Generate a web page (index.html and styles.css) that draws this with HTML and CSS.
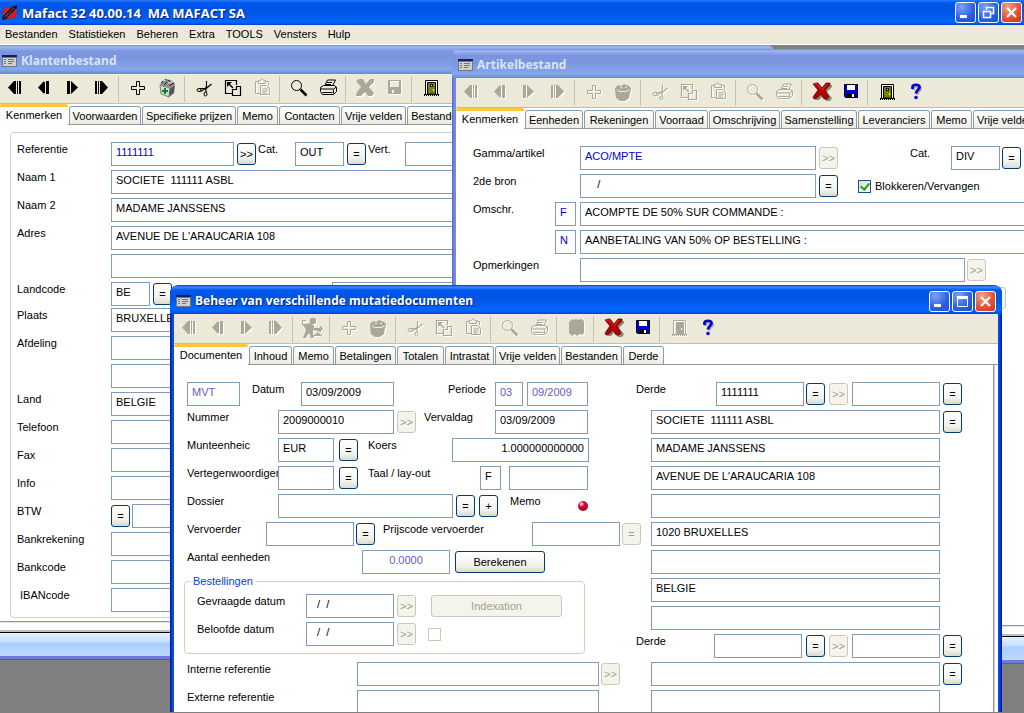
FILE: index.html
```html
<!DOCTYPE html>
<html lang="nl">
<head>
<meta charset="utf-8">
<title>Mafact 32</title>
<link rel="stylesheet" href="styles.css">
</head>
<body>
<svg class="defs" aria-hidden="true">
  <symbol id="first" viewBox="0 0 29 28"><path d="M8 13.5 14 7v13zM14 7h2v13h-2zM17 7h1v13h-1zM19 7h2v13h-2z" fill="currentColor"/></symbol>
  <symbol id="prev" viewBox="0 0 29 28"><path d="M9 13.5 15 7v13zM15 8h1v11h-1zM17 7h3v13h-3z" fill="currentColor"/></symbol>
  <symbol id="next" viewBox="0 0 29 28"><path d="M9 7h3v13H9zM13 7l7 6.500-7 6.500z" fill="currentColor"/></symbol>
  <symbol id="last" viewBox="0 0 29 28"><path d="M8 7h2v13H8zM11 7h1v13h-1zM13 7h2v13h-2zM15 7l6 6.500-6 6.500z" fill="currentColor"/></symbol>
  <symbol id="plus" viewBox="0 0 29 28"><path d="M12.500 7.500h3v5h5v3h-5v5h-3v-5h-5v-3h5z" fill="none" stroke="currentColor"/></symbol>
  <symbol id="bin" viewBox="0 0 29 28"><path d="M6 10l3-3 3 1 3-2 5 2 2 2v3l-1 1-1 6-4 3h-5l-4-3-1-8z" fill="currentColor"/><path d="M8 12l3 1.500h6l4-2M11 10l2-1M16 9l2 1" stroke="#fff" stroke-width=".800" fill="none"/></symbol>
  <symbol id="bincolor" viewBox="0 0 29 28"><path d="M7 11l10 3-1 9-8-3z" fill="#d4d4d0" stroke="#555" stroke-width=".700"/><path d="M17 14l5-3-1 8-5 4z" fill="#555"/><path d="M7 11l2-4 4-2 5 1 4 4v1l-5 3z" fill="#909090"/><path d="M8 9l4-3M11 11l3-3M16 12l5-3M15 6l3 3" stroke="#222"/><path d="M10 7l3-1M15 9l4-1" stroke="#e8e8e8"/><path d="M12 5l2 2" stroke="#20a030" stroke-width="1.500"/><path d="M12 14v6M9 17h6" stroke="#008a20" stroke-width="2"/></symbol>
  <symbol id="cut" viewBox="0 0 29 28"><path d="M16.500 7v5l-1 2.500M21.500 10l-6 5M9 14.500h7v4M10.500 17.500l5-3" fill="none" stroke="currentColor" stroke-width="1.200"/><ellipse cx="9" cy="16" rx="2" ry="1.500" fill="none" stroke="currentColor"/><ellipse cx="15.500" cy="20" rx="1.500" ry="2" fill="none" stroke="currentColor"/></symbol>
  <symbol id="copy" viewBox="0 0 29 28"><path d="M17.500 11V6.500h-11v13h7M17.500 12.500h4v9h-8v-6h4z" fill="none" stroke="currentColor" stroke-width="1.200"/><path d="M8 8h5l-5 5z" fill="currentColor"/><path d="M9 9l5 5" stroke="currentColor" stroke-width="1.500" fill="none"/></symbol>
  <symbol id="paste" viewBox="0 0 29 28"><path d="M11 7.500H7.500v12H12M17 7.500h3.500V11M10.500 9.500v-3h2l1-1.500h1l1 1.500h2v3z" fill="none" stroke="currentColor"/><path d="M12.500 11.500h6l3 3v6h-9zM14.500 15h5M14.500 17h5M14.500 19h4" fill="none" stroke="currentColor"/></symbol>
  <symbol id="find" viewBox="0 0 29 28"><circle cx="11.500" cy="11.500" r="5" fill="none" stroke="currentColor"/><path d="M15.500 15.500l6 6" stroke="currentColor" stroke-width="2.500"/></symbol>
  <symbol id="print" viewBox="0 0 29 28"><path d="M10.500 12l3-6h8l-3 6M13 8.500h5M12 10.500h5M6.500 13.500l3-2h11l2 2v4l-3 3h-11l-2-3zM6.500 15h13l3-2M8.500 18.500h10M19.500 15.500v4" fill="none" stroke="currentColor"/></symbol>
  <symbol id="cross" viewBox="0 0 29 28"><path d="M5 7l3-2h4l3 5 4-5h4v3l-5 5 5 6-2 3h-4l-3-4-4 4H5l1-4 4-5z" fill="currentColor"/></symbol>
  <symbol id="crossred" viewBox="0 0 29 28"><path d="M8 8l4-1 4 5 4-5 5 0v2l-5 5 5 6-2 3h-4l-3-5-4 4H8l1-3 4-5z" fill="#8a8778"/><path d="M6 6l3-1h2l4 5 4-5h4v2l-5 5 4 7-2 2h-3l-3-5-4 4-3 1-1-2 5-7z" fill="#b00000" stroke="#500000" stroke-width=".700"/><path d="M7 6h3l4 5M15 12l5-6" stroke="#f03030" fill="none"/></symbol>
  <symbol id="disk" viewBox="0 0 29 28"><path d="M8 6h13v14H9l-1-1zM10 7v6h9V7zM12 16v3h2v-3z" fill="currentColor" fill-rule="evenodd"/></symbol>
  <symbol id="diskblue" viewBox="0 0 29 28"><path d="M8.500 6.500h13v13h-12l-1-1z" fill="#0000d0" stroke="#000"/><path d="M11 7h8v5h-8z" fill="#fff"/><path d="M11 15h8v4h-8z"/><path d="M16 16h2v3h-2z" fill="#fff"/></symbol>
  <symbol id="door" viewBox="0 0 29 28"><path d="M9 7h11v13H9z" fill="#fff"/><path d="M8.500 20V6.500h12V20" fill="none" stroke="#000"/><path d="M10.500 8.500h8V20h-8z" fill="#808000" stroke="#000"/><path d="M13 10h3v3h-3z" fill="#111"/><path d="M14 11h1v1h-1z" fill="#fff"/><path d="M16 15h1v2h-1z" fill="#ff0"/><path d="M7 20h15v1H7z"/><path d="M7 21.500h15" stroke="#000" stroke-dasharray="1 1"/></symbol>
  <symbol id="doorgrey" viewBox="0 0 29 28"><path d="M8.500 20V6.500h12V20" fill="none" stroke="currentColor"/><path d="M11 8h8v12h-8z" fill="currentColor"/><path d="M16 14h1v2h-1z" fill="#fff"/><path d="M7 20h15v1H7z" fill="currentColor"/><path d="M7 21.500h15" stroke="currentColor" stroke-dasharray="1 1"/></symbol>
  <symbol id="help" viewBox="0 0 29 28"><path d="M10.500 11V9.500c0-3 7-3 7 0 0 2.500-3 2-3.500 6" transform="translate(1 1)" fill="none" stroke="#999" stroke-width="2.500"/><path d="M10.500 11V9c0-3 7-3 7 0 0 2.500-3.500 3-3.500 6.500" fill="none" stroke="#0000d0" stroke-width="2.700"/><circle cx="14" cy="19.500" r="1.800" fill="#0000d0"/></symbol>
  <symbol id="worker" viewBox="0 0 29 28"><circle cx="15" cy="7" r="3.200" fill="currentColor"/><path d="M4 6h4v1H5v3h3l5-1 3 3v2l5 0 2-2 2 3-3 3-3-1-4-1v3l1 5h-3l-2-5-3 5H5l3-8-2-4-2-1zM15 22l5-4 4 4z" fill="currentColor"/><path d="M22 18h1M24 20h1M23 22h1M25 17h1" stroke="currentColor"/></symbol>
  <symbol id="book" viewBox="0 0 29 28"><path d="M7 8l3-3 2 1 2-1 2 1 3-1 3 2v12l-2 2-2-1-3 2-2-2-3 2-3-3z" fill="currentColor"/></symbol>
  <symbol id="form" viewBox="0 0 15 12"><path d="M0 0h15v12H0z" fill="#707888"/><path d="M0 0h15v2H0z" fill="#102060"/><path d="M1 3h13v8H1z" fill="#d0d0cc"/><path d="M2 4.500h2M2 6.500h2M2 8.500h2M6 4.500h6M6 6.500h6M6 8.500h4" stroke="#777"/></symbol>
</svg>

<div class="app">
  <header class="titlebar main-title">
    <svg class="logo" viewBox="0 0 16 16" aria-hidden="true"><path d="M1 4l5-1v8l-3 4H1z" fill="#e01818"/><path d="M5 3l10-2-1 11-9 3z" fill="#e01818"/><path d="M0 12L10 2l5-2v3L5 14l-5 1z" fill="#181820"/><path d="M3 12l9-9M5 13l9-9" stroke="#70707c" stroke-width=".800"/><path d="M3 11l3-3M10 8l3-3" stroke="#b01020"/></svg>
    <h1>Mafact 32 40.00.14&nbsp; MA MAFACT SA</h1>
    <div class="controls">
      <button class="ctl" aria-label="Minimaliseren"><svg viewBox="0 0 19 19"><path d="M4 12h7v3H4z" fill="#fff"/></svg></button>
      <button class="ctl" aria-label="Herstellen"><svg viewBox="0 0 19 19"><path d="M7.500 7V4.500h7v6H12M7 4.500h8M4.500 8.500h7v6h-7zM4 8.500h8" fill="none" stroke="#fff" stroke-width="1.500"/></svg></button>
      <button class="ctl close" aria-label="Sluiten"><svg viewBox="0 0 19 19"><path d="M5 5l9 9M14 5l-9 9" stroke="#fff" stroke-width="2.200"/></svg></button>
    </div>
  </header>
  <nav class="menu">
    <button>Bestanden</button><button>Statistieken</button><button>Beheren</button><button>Extra</button><button>TOOLS</button><button>Vensters</button><button>Hulp</button>
  </nav>

  <main class="desktop">
    <section class="window customers">
      <header class="titlebar"><svg class="form-icon"><use href="#form"/></svg><h2>Klantenbestand</h2></header>
      <div class="toolbar">
        <button aria-label="Eerste"><svg><use href="#first"/></svg></button><button aria-label="Vorige"><svg><use href="#prev"/></svg></button><button aria-label="Volgende"><svg><use href="#next"/></svg></button><button aria-label="Laatste"><svg><use href="#last"/></svg></button><i></i>
        <button aria-label="Toevoegen"><svg><use href="#plus"/></svg></button><button aria-label="Verwijderen"><svg><use href="#bincolor"/></svg></button><i></i>
        <button aria-label="Knippen"><svg><use href="#cut"/></svg></button><button aria-label="Kopiëren"><svg><use href="#copy"/></svg></button><button aria-label="Plakken" disabled><svg><use href="#paste"/></svg></button><i></i>
        <button aria-label="Zoeken"><svg><use href="#find"/></svg></button><button aria-label="Afdrukken"><svg><use href="#print"/></svg></button><i></i>
        <button aria-label="Annuleren" disabled><svg><use href="#cross"/></svg></button><button aria-label="Opslaan" disabled><svg><use href="#disk"/></svg></button><i></i>
        <button aria-label="Afsluiten"><svg><use href="#door"/></svg></button>
      </div>
      <div class="tabs">
        <button class="active w68">Kenmerken</button><button class="w72">Voorwaarden</button><button class="w94">Specifieke prijzen</button><button class="w41">Memo</button><button class="w61">Contacten</button><button class="w65">Vrije velden</button><button class="w61">Bestanden</button>
      </div>
      <div class="pane">
        <div class="frame">
          <div class="rows">
            <div class="row"><label class="w94" for="c1">Referentie</label><input class="w123 key" id="c1" value="1111111"><button class="btn ml3">&gt;&gt;</button><label class="ml2 w37" for="c2">Cat.</label><input class="w49" id="c2" value="OUT"><button class="btn ml3">=</button><label class="ml2 w37" for="c3">Vert.</label><input class="w123" id="c3"></div>
            <div class="row"><label class="w94" for="c4">Naam 1</label><input class="grow" id="c4" value="SOCIETE  111111 ASBL"></div>
            <div class="row"><label class="w94" for="c5">Naam 2</label><input class="grow" id="c5" value="MADAME JANSSENS"></div>
            <div class="row"><label class="w94" for="c6">Adres</label><input class="grow" id="c6" value="AVENUE DE L'ARAUCARIA 108"></div>
            <div class="row"><span class="w94"></span><input class="grow" aria-label="Adres 2"></div>
            <div class="row"><label class="w94" for="c7">Landcode</label><input class="w39" id="c7" value="BE"><button class="btn ml3">=</button><span class="w160"></span><input class="grow" aria-label="Postcode"></div>
          </div>
          <div class="rows">
            <div class="row"><label class="w94" for="c8">Plaats</label><input class="grow" id="c8" value="BRUXELLES"></div>
            <div class="row"><label class="w94" for="c9">Afdeling</label><input class="grow" id="c9"></div>
            <div class="row"><span class="w94"></span><input class="grow" aria-label="Afdeling 2"></div>
            <div class="row"><label class="w94" for="c10">Land</label><input class="grow" id="c10" value="BELGIE"></div>
            <div class="row"><label class="w94" for="c11">Telefoon</label><input class="grow" id="c11"></div>
            <div class="row"><label class="w94" for="c12">Fax</label><input class="grow" id="c12"></div>
            <div class="row"><label class="w94" for="c13">Info</label><input class="grow" id="c13"></div>
            <div class="row"><label class="w94" for="c14">BTW</label><button class="btn">=</button><input class="grow ml2" id="c14"></div>
            <div class="row"><label class="w94" for="c15">Bankrekening</label><input class="grow" id="c15"></div>
            <div class="row"><label class="w94" for="c16">Bankcode</label><input class="grow" id="c16"></div>
            <div class="row"><label class="w94 indent" for="c17">IBANcode</label><input class="grow" id="c17"></div>
          </div>
        </div>
      </div>
      <div class="foot"></div>
    </section>

    <section class="window articles">
      <header class="titlebar"><svg class="form-icon"><use href="#form"/></svg><h2>Artikelbestand</h2></header>
      <div class="toolbar">
        <button aria-label="Eerste" disabled><svg><use href="#first"/></svg></button><button aria-label="Vorige" disabled><svg><use href="#prev"/></svg></button><button aria-label="Volgende" disabled><svg><use href="#next"/></svg></button><button aria-label="Laatste" disabled><svg><use href="#last"/></svg></button><i></i>
        <button aria-label="Toevoegen" disabled><svg><use href="#plus"/></svg></button><button aria-label="Verwijderen" disabled><svg><use href="#bin"/></svg></button><i></i>
        <button aria-label="Knippen" disabled><svg><use href="#cut"/></svg></button><button aria-label="Kopiëren" disabled><svg><use href="#copy"/></svg></button><button aria-label="Plakken" disabled><svg><use href="#paste"/></svg></button><i></i>
        <button aria-label="Zoeken" disabled><svg><use href="#find"/></svg></button><button aria-label="Afdrukken" disabled><svg><use href="#print"/></svg></button><i></i>
        <button aria-label="Annuleren"><svg><use href="#crossred"/></svg></button><button aria-label="Opslaan"><svg><use href="#diskblue"/></svg></button><i></i>
        <button aria-label="Afsluiten"><svg><use href="#door"/></svg></button><button aria-label="Hulp"><svg><use href="#help"/></svg></button>
      </div>
      <div class="tabs">
        <button class="active w68">Kenmerken</button><button class="w58">Eenheden</button><button class="w70">Rekeningen</button><button class="w53">Voorraad</button><button class="w71">Omschrijving</button><button class="w76">Samenstelling</button><button class="w72">Leveranciers</button><button class="w41">Memo</button><button class="w65">Vrije velden</button>
      </div>
      <div class="pane">
        <div class="rows">
          <div class="row"><label class="w107" for="a1">Gamma/artikel</label><input class="w236 key" id="a1" value="ACO/MPTE"><button class="btn ml3" disabled>&gt;&gt;</button><label class="ml72 w41" for="a2">Cat.</label><input class="w49" id="a2" value="DIV"><button class="btn ml2">=</button></div>
          <div class="row"><label class="w107" for="a3">2de bron</label><input class="w236" id="a3" value="    /"><button class="btn ml3">=</button><label class="check ml20"><input type="checkbox" checked>Blokkeren/Vervangen</label></div>
          <div class="row"><label class="w82" for="a4">Omschr.</label><input class="w21 key" id="a4" value="F"><input class="grow ml4" aria-label="Omschrijving F" value="ACOMPTE DE 50% SUR COMMANDE :"></div>
          <div class="row"><span class="w82"></span><input class="w21 key" aria-label="Taal" value="N"><input class="grow ml4" aria-label="Omschrijving N" value="AANBETALING VAN 50% OP BESTELLING :"></div>
          <div class="row"><label class="w107" for="a5">Opmerkingen</label><input class="w385" id="a5"><button class="btn ml2" disabled>&gt;&gt;</button></div>
          <div class="row"><span class="w107"></span><input class="w405" aria-label="Opmerkingen 2"><button class="btn ml2" disabled></button></div>
        </div>
      </div>
      <div class="foot"></div>
    </section>

    <section class="window documents">
      <header class="titlebar"><svg class="form-icon"><use href="#form"/></svg><h2>Beheer van verschillende mutatiedocumenten</h2>
        <div class="controls">
          <button class="ctl" aria-label="Minimaliseren"><svg viewBox="0 0 19 19"><path d="M4 12h7v3H4z" fill="#fff"/></svg></button>
          <button class="ctl" aria-label="Maximaliseren"><svg viewBox="0 0 19 19"><path d="M4.500 5v9.500h10V5M4 5.500h11" fill="none" stroke="#fff"/><path d="M4 4h11v3H4z" fill="#fff"/></svg></button>
          <button class="ctl close" aria-label="Sluiten"><svg viewBox="0 0 19 19"><path d="M5 5l9 9M14 5l-9 9" stroke="#fff" stroke-width="2.200"/></svg></button>
        </div>
      </header>
      <div class="toolbar">
        <button aria-label="Eerste" disabled><svg><use href="#first"/></svg></button><button aria-label="Vorige" disabled><svg><use href="#prev"/></svg></button><button aria-label="Volgende" disabled><svg><use href="#next"/></svg></button><button aria-label="Laatste" disabled><svg><use href="#last"/></svg></button><i></i>
        <button aria-label="Verwerken" disabled><svg><use href="#worker"/></svg></button><i></i>
        <button aria-label="Toevoegen" disabled><svg><use href="#plus"/></svg></button><button aria-label="Verwijderen" disabled><svg><use href="#bin"/></svg></button><i></i>
        <button aria-label="Knippen" disabled><svg><use href="#cut"/></svg></button><button aria-label="Kopiëren" disabled><svg><use href="#copy"/></svg></button><button aria-label="Plakken" disabled><svg><use href="#paste"/></svg></button><i></i>
        <button aria-label="Zoeken" disabled><svg><use href="#find"/></svg></button><button aria-label="Afdrukken" disabled><svg><use href="#print"/></svg></button><i></i>
        <button aria-label="Boeken" disabled><svg><use href="#book"/></svg></button><i></i>
        <button aria-label="Annuleren"><svg><use href="#crossred"/></svg></button><button aria-label="Opslaan"><svg><use href="#diskblue"/></svg></button><i></i>
        <button aria-label="Afsluiten" disabled><svg><use href="#doorgrey"/></svg></button><button aria-label="Hulp"><svg><use href="#help"/></svg></button>
      </div>
      <div class="tabs">
        <button class="active w74">Documenten</button><button class="w43">Inhoud</button><button class="w41">Memo</button><button class="w61">Betalingen</button><button class="w47">Totalen</button><button class="w49">Intrastat</button><button class="w65">Vrije velden</button><button class="w61">Bestanden</button><button class="w41">Derde</button>
      </div>
      <div class="pane columns">
        <div class="rows left">
          <div class="row"><input class="w53 dim" aria-label="Documenttype" value="MVT" readonly><label class="ml12 w49" for="d1">Datum</label><input class="w93" id="d1" value="03/09/2009"><label class="ml54 w47" for="d2">Periode</label><input class="w28 dim" id="d2" value="03" readonly><input class="w61 ml4 dim" aria-label="Periode jaar" value="09/2009" readonly></div>
          <div class="row"><label class="w91" for="d3">Nummer</label><input class="w116" id="d3" value="2009000010"><button class="btn ml3" disabled>&gt;&gt;</button><label class="ml8 w71" for="d4">Vervaldag</label><input class="w93" id="d4" value="03/09/2009"></div>
          <div class="row"><label class="w91" for="d5">Munteenheic</label><input class="w56" id="d5" value="EUR"><button class="btn ml5">=</button><label class="ml10 w84" for="d6">Koers</label><input class="w137 right" id="d6" value="1.000000000000"></div>
          <div class="row"><label class="w91" for="d7">Vertegenwoordiger</label><input class="w56" id="d7"><button class="btn ml5">=</button><label class="ml10 w112" for="d8">Taal / lay-out</label><input class="w21" id="d8" value="F"><input class="w79 ml8" aria-label="Lay-out"></div>
          <div class="row"><label class="w91" for="d9">Dossier</label><input class="w175" id="d9"><button class="btn ml3">=</button><button class="btn ml4">+</button><span class="caption ml12 w68">Memo</span><span class="led"></span></div>
          <div class="row"><label class="w79" for="d10">Vervoerder</label><input class="w88" id="d10"><button class="btn ml2">=</button><label class="ml8 w149" for="d11">Prijscode vervoerder</label><input class="w88" id="d11"><button class="btn ml2" disabled>=</button></div>
          <div class="row"><label class="w175" for="d12">Aantal eenheden</label><input class="w88 dim center" id="d12" value="0.0000" readonly><button class="btn ml5 w90">Berekenen</button></div>
          <fieldset>
            <legend>Bestellingen</legend>
            <div class="row"><label class="w109" for="d13">Gevraagde datum</label><input class="w88" id="d13" value="  /  /"><button class="btn ml3" disabled>&gt;&gt;</button><button class="btn ml15 w131" disabled>Indexation</button></div>
            <div class="row"><label class="w109" for="d14">Beloofde datum</label><input class="w88" id="d14" value="  /  /"><button class="btn ml3" disabled>&gt;&gt;</button><span class="check ml12"><input type="checkbox" aria-label="Indexatie" disabled></span></div>
          </fieldset>
          <div class="row"><label class="w170" for="d15">Interne referentie</label><input class="w242" id="d15"><button class="btn ml2" disabled>&gt;&gt;</button></div>
          <div class="row"><label class="w170" for="d16">Externe referentie</label><input class="w242" id="d16"></div>
        </div>
        <div class="rows">
          <div class="row"><label class="w80" for="e1">Derde</label><input class="w88" id="e1" value="1111111"><button class="btn ml2">=</button><button class="btn ml4" disabled>&gt;&gt;</button><input class="w88 ml4" aria-label="Derde code"><button class="btn ml3">=</button></div>
          <div class="row"><input class="w289 ml15" aria-label="Naam" value="SOCIETE  111111 ASBL"><button class="btn ml3">=</button></div>
          <div class="row"><input class="w289 ml15" aria-label="Naam 2" value="MADAME JANSSENS"></div>
          <div class="row"><input class="w289 ml15" aria-label="Adres" value="AVENUE DE L'ARAUCARIA 108"></div>
          <div class="row"><input class="w289 ml15" aria-label="Adres 2"></div>
          <div class="row"><input class="w289 ml15" aria-label="Plaats" value="1020 BRUXELLES"></div>
          <div class="row"><input class="w289 ml15" aria-label="Afdeling"></div>
          <div class="row"><input class="w289 ml15" aria-label="Land" value="BELGIE"></div>
          <div class="row"><input class="w289 ml15" aria-label="Extra"></div>
          <div class="row"><label class="w78" for="e2">Derde</label><input class="w88" id="e2"><button class="btn ml4">=</button><button class="btn ml4" disabled>&gt;&gt;</button><input class="w88 ml4" aria-label="Derde code 2"><button class="btn ml3">=</button></div>
          <div class="row"><input class="w289 ml15" aria-label="Naam derde"><button class="btn ml3">=</button></div>
          <div class="row"><input class="w289 ml15" aria-label="Naam derde 2"></div>
        </div>
      </div>
    </section>
  </main>
</div>
</body>
</html>
```
FILE: styles.css
```css
* { box-sizing: border-box; }
body { margin: 0; overflow: hidden; font: 11px/14px "Liberation Sans", Arial, sans-serif; color: #000; }
button, input { font: inherit; color: inherit; margin: 0; padding: 0; }
h1, h2 { margin: 0; font: bold 12px/16px "Open Sans", "Noto Sans", sans-serif; white-space: nowrap; }
.defs { display: none; }

.app { display: flex; flex-direction: column; height: 100vh; }

/* Title bars */
.titlebar { display: flex; align-items: center; gap: 3px; color: #fff; }
.main-title { height: 25px; flex: none; padding: 0 2px; background: linear-gradient(#2a7cf8, #0058ee 12%, #0054e3 45%, #06f 88%, #0058f0 94%, #0040d0); }
.main-title h1, .documents h2 { text-shadow: 1px 1px 1px #00207c; }
.logo { width: 16px; height: 16px; }
.main-title h1 { padding-left: 1px; font-size: 13px; }
.controls { display: flex; gap: 2px; margin-left: auto; }
.ctl { width: 21px; height: 21px; border: 1px solid #fff; border-radius: 3px; background: radial-gradient(circle at 30% 20%, #7fa2f5, #2a5fe0 60%, #1f4fd0); }
.ctl svg { display: block; width: 19px; height: 19px; }
.ctl.close { background: radial-gradient(circle at 30% 20%, #f0a088, #e0502c 60%, #c83a14); }

.menu { display: flex; flex: none; gap: 11px; height: 20px; padding: 0 5px 2px; background: #ece9d8; border-bottom: 1px solid #fff; }
.menu button { border: 0; background: none; }

/* Free-floating windows */
.desktop { position: relative; flex: 1; overflow: hidden; background: #808080; }
.window { position: absolute; display: flex; flex-direction: column; background: #fff; }
.window .titlebar { height: 29px; flex: none; padding: 3px 6px 0 2px; gap: 4px; color: #d8e4f8; border-radius: 7px 7px 0 0; background: linear-gradient(#6f88dc, #9fb8f2 6%, #7b96df 22%, #7b96df 45%, #84a6ea 85%, #6c88da); }
.form-icon { width: 15px; height: 12px; flex: none; }
.customers { left: 0; top: 0; width: 774px; height: 615px; border-radius: 0 8px 0 0; }
.customers .titlebar { border-top-left-radius: 0; }
.articles { left: 452px; top: 4px; width: 772px; height: 615px; padding-left: 4px; border-radius: 8px 0 0 0; background: linear-gradient(90deg, #5a68cc, #8090e0 3px, #6f7ed8 4px, #fff 4px); }
.articles .titlebar, .documents .titlebar { margin-left: -4px; padding-left: 6px; }
.documents { left: 170px; top: 240px; bottom: 1px; width: 832px; padding: 0 4px; overflow: hidden; border-radius: 8px 8px 0 0; background: linear-gradient(90deg, #0018b0, #0a50ea 3px, #0a50ea 4px, #fff 4px 828px, #0a50ea 828px, #0040e0 830px, #0010a0); }
.documents .titlebar { margin-right: -4px; color: #fff; background: linear-gradient(#0838c8, #3a8cff 7%, #0058ee 18%, #0054e3 45%, #06f 85%, #0058f0 94%, #0040d0); }

/* Toolbar */
.toolbar { display: flex; flex: none; height: 30px; padding-bottom: 1px; background: #ece9d8; border-bottom: 1px solid #c0bdac; }
.toolbar button { width: 29px; height: 28px; flex: none; border: 0; background: none; color: #000; }
.toolbar button:disabled { color: #aca899; filter: drop-shadow(1px 1px 0 #fff); }
.toolbar svg { display: block; width: 29px; height: 28px; }
.toolbar i { width: 1px; flex: none; margin: 2px 5px 0 2px; background: #c5c2b2; }

/* Tabs */
.tabs { display: flex; flex: none; align-items: flex-end; gap: 1px; height: 21px; background: linear-gradient(#fff 20px, #919b9c 20px); }
.tabs button { flex: none; height: 19px; border: 1px solid #919b9c; border-top-color: #7f9db9; border-radius: 3px 3px 0 0; background: linear-gradient(#fff, #ecebe4); white-space: nowrap; }
.tabs .active { height: 21px; border: 0; border-top: 3px solid #ffc73c; border-radius: 2px 2px 0 0; padding-bottom: 3px; background: #fdfdfe; }

/* Form panes */
.pane { flex: 1; min-height: 0; background: #fff; border-bottom: 1px solid #919b9c; }
.customers .pane { padding: 7px 8px 3px 10px; }
.articles .pane { padding: 17px 0 0 17px; }
.documents .pane { padding: 17px 0 0 13px; border-bottom: 0; border-right: 1px solid #919b9c; box-shadow: 1px 0 #d8d5c4; margin-right: 4px; }
.columns { display: flex; overflow: hidden; }
.left { width: 449px; flex: none; }
.frame { display: flex; flex-direction: column; gap: 2px; padding: 9px 6px 5px; border: 1px solid #d0d0bf; border-radius: 4px; }
.rows { display: flex; flex-direction: column; gap: 4px; }
.row { display: flex; flex: none; height: 24px; align-items: flex-start; }
label, .caption { flex: none; overflow: hidden; white-space: nowrap; }
.indent { padding-left: 3px; }
.row input { height: 24px; padding: 0 4px 4px; border: 1px solid #7f9db9; border-radius: 0; background: #fff; min-width: 0; flex: none; outline: 0; }
.row .grow { flex: 1; }
.row .key { color: #0000e0; }
.row .dim { color: #6060c8; }
.right { text-align: right; }
.center { text-align: center; }
.btn { align-self: center; flex: none; width: 19px; height: 22px; border: 1px solid #003c74; border-radius: 3px; background: linear-gradient(#fff, #f2f1ea 70%, #dcd8cc); white-space: nowrap; }
.btn:disabled { border-color: #c9c7ba; background: #f5f4ea; color: #a1a192; }
.check { display: flex; align-self: center; align-items: center; gap: 4px; }
.row .check input { appearance: none; width: 13px; height: 13px; padding: 0; border-color: #1c5180; background: linear-gradient(135deg, #dcdcd7, #fff); }
.row .check input:checked::after { content: ""; display: block; width: 4px; height: 7px; margin: 0 0 0 3px; border: solid #21a121; border-width: 0 2px 2px 0; transform: rotate(40deg); }
.row .check input:disabled { border-color: #cac8bb; background: #fff; }
.led { width: 10px; height: 10px; align-self: center; border-radius: 50%; background: radial-gradient(circle at 35% 30%, #fff, #e00040 30%, #a00028 70%, #400010); }
fieldset { margin: -4px 51px 4px -3px; padding: 6px 12px 7px; border: 1px solid #d0d0bf; border-radius: 4px; min-width: 0; }
fieldset .row + .row { margin-top: 4px; }
legend { margin-left: -6px; padding: 0 3px 0 2px; color: #0046d5; }
.foot { flex: none; height: 38px; background: linear-gradient(#e4e2d6 1px, #fff 1px 8px, #c0c0c0 8px 10px, #000 10px 11px, #e6f1ff 11px, #c4defe 20px, #a9cefc 21px, #bcd9ff 34px, #7078dc 34px 37px, #5058c0 37px); }

/* Shared widths */
.w21 { width: 21px; } .w28 { width: 28px; } .w37 { width: 37px; } .w39 { width: 39px; } .w41 { width: 41px; }
.w43 { width: 43px; } .w47 { width: 47px; } .w49 { width: 49px; } .w53 { width: 53px; } .w56 { width: 56px; }
.w58 { width: 58px; } .w61 { width: 61px; } .w65 { width: 65px; } .w68 { width: 68px; } .w70 { width: 70px; }
.w71 { width: 71px; } .w72 { width: 72px; } .w74 { width: 74px; } .w76 { width: 76px; } .w78 { width: 78px; }
.w79 { width: 79px; } .w80 { width: 80px; } .w82 { width: 82px; } .w84 { width: 84px; } .w88 { width: 88px; }
.w90 { width: 90px; } .w91 { width: 91px; } .w93 { width: 93px; } .w94 { width: 94px; } .w107 { width: 107px; }
.w109 { width: 109px; } .w112 { width: 112px; } .w116 { width: 116px; } .w123 { width: 123px; } .w131 { width: 131px; }
.w137 { width: 137px; } .w149 { width: 149px; } .w160 { width: 160px; } .w170 { width: 170px; } .w175 { width: 175px; }
.w236 { width: 236px; } .w242 { width: 242px; } .w289 { width: 289px; } .w385 { width: 385px; } .w405 { width: 405px; }

/* Shared gaps */
.ml2 { margin-left: 2px; } .ml3 { margin-left: 3px; } .ml4 { margin-left: 4px; } .ml5 { margin-left: 5px; }
.ml8 { margin-left: 8px; } .ml10 { margin-left: 10px; } .ml12 { margin-left: 12px; } .ml15 { margin-left: 15px; }
.ml20 { margin-left: 20px; } .ml54 { margin-left: 54px; } .ml72 { margin-left: 72px; }
```
